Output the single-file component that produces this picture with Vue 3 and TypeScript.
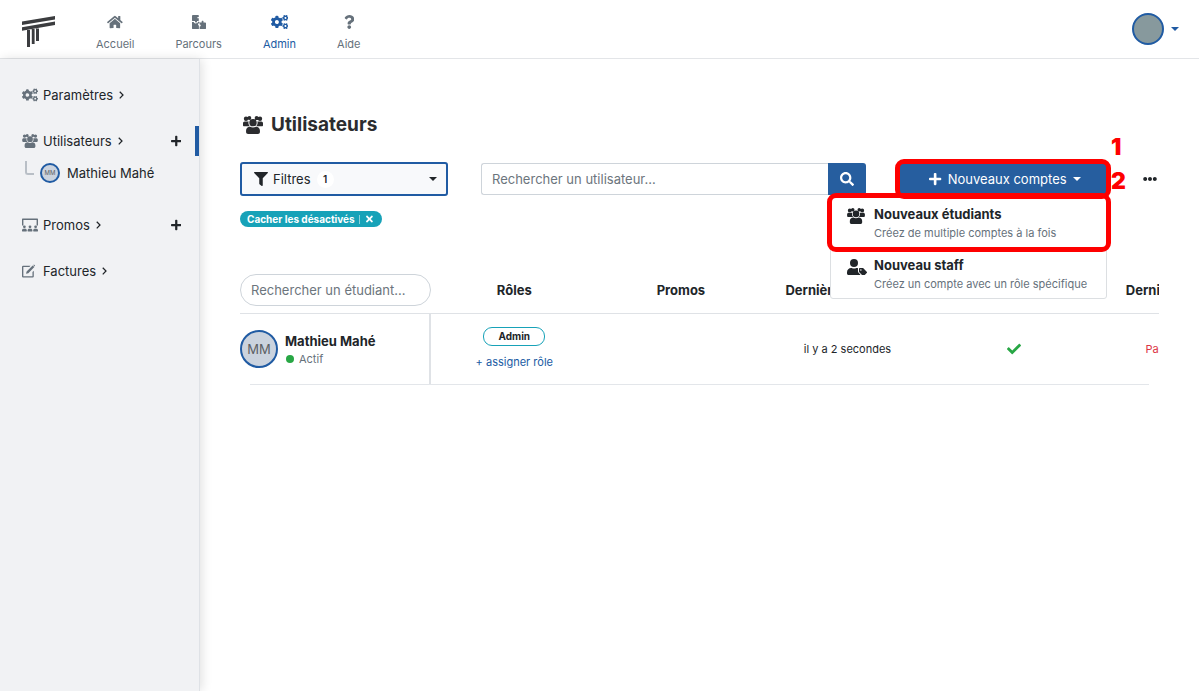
<script setup lang="ts">
import { ref } from 'vue'

interface Glyph { box: string; d: string }

const glyphs: Record<string, Glyph> = {
  home: { box: '0 0 576 512', d: 'M280.37 148.26L96 300.11V464a16 16 0 0 0 16 16l112.06-.29a16 16 0 0 0 15.92-16V368a16 16 0 0 1 16-16h64a16 16 0 0 1 16 16v95.64a16 16 0 0 0 16 16.05L464 480a16 16 0 0 0 16-16V300L295.67 148.26a12.19 12.19 0 0 0-15.3 0zM571.6 251.47L488 182.56V44.05a12 12 0 0 0-12-12h-56a12 12 0 0 0-12 12v72.61L318.47 43a48 48 0 0 0-61 0L4.34 251.47a12 12 0 0 0-1.6 16.9l25.5 31A12 12 0 0 0 45.15 301l235.22-193.74a12.19 12.19 0 0 1 15.3 0L530.9 301a12 12 0 0 0 16.9-1.6l25.5-31a12 12 0 0 0-1.7-16.93z' },
  puzzle: { box: '0 0 512 512', d: 'M32 0h200a16 16 0 0 1 16 16v62c-14-12-58-10-58 18s44 34 58 20v88a16 16 0 0 1-16 16h-56c12 12 20 50-28 50s-44-38-30-50H32a32 32 0 0 1-32-32V32A32 32 0 0 1 32 0zM0 260h64c4 54 104 66 124 10l44 52c-18 16-14 60 20 60v130H32a32 32 0 0 1-32-32zM230 240l52 46-36 30-36-46zM290 272h62c-18-70 82-80 68-8l-2 8h62a32 32 0 0 1 32 32v176a32 32 0 0 1-32 32H280v-90c54 6 54-84 0-76v-64a16 16 0 0 1 10-10z' },
  cogs: { box: '0 0 640 512', d: 'M512.1 191l-8.2 14.3c-3 5.3-9.4 7.5-15.1 5.4-11.8-4.4-22.6-10.7-32.1-18.6-4.6-3.8-5.8-10.5-2.8-15.7l8.2-14.3c-6.9-8-12.3-17.3-15.9-27.4h-16.5c-6 0-11.2-4.3-12.2-10.3-2-12-2.1-24.6 0-37.1 1-6 6.2-10.4 12.2-10.4h16.5c3.6-10.1 9-19.4 15.9-27.4l-8.2-14.3c-3-5.2-1.9-11.9 2.8-15.7 9.5-7.9 20.4-14.2 32.1-18.6 5.7-2.1 12.1.1 15.1 5.4l8.2 14.3c10.5-1.9 21.2-1.9 31.7 0L552 6.3c3-5.3 9.4-7.5 15.1-5.4 11.8 4.4 22.6 10.7 32.1 18.6 4.6 3.8 5.8 10.5 2.8 15.7l-8.2 14.3c6.9 8 12.3 17.3 15.9 27.4h16.5c6 0 11.2 4.3 12.2 10.3 2 12 2.1 24.6 0 37.1-1 6-6.2 10.4-12.2 10.4h-16.5c-3.6 10.1-9 19.4-15.9 27.4l8.2 14.3c3 5.2 1.9 11.9-2.8 15.7-9.5 7.9-20.4 14.2-32.1 18.6-5.7 2.1-12.1-.1-15.1-5.4l-8.2-14.3c-10.4 1.9-21.2 1.9-31.7 0zm-10.5-58.8c38.5 29.6 82.4-14.3 52.8-52.8-38.5-29.7-82.4 14.3-52.8 52.8zM386.3 286.1l33.7 16.8c10.1 5.8 14.5 18.1 10.5 29.1-8.9 24.2-26.4 46.4-42.6 65.8-7.4 8.9-20.2 11.1-30.3 5.3l-29.1-16.8c-16 13.7-34.6 24.6-54.9 31.7v33.6c0 11.6-8.3 21.6-19.7 23.6-24.6 4.2-50.4 4.4-75.9 0-11.5-2-20-11.9-20-23.6V418c-20.3-7.2-38.9-18-54.9-31.7L74 403c-10 5.8-22.9 3.6-30.3-5.3-16.2-19.4-33.3-41.6-42.2-65.7-4-10.9.4-23.2 10.5-29.1l33.3-16.8c-3.9-20.9-3.9-42.4 0-63.4L12 205.8c-10.1-5.8-14.6-18.1-10.5-29 8.9-24.2 26-46.4 42.2-65.8 7.4-8.9 20.2-11.1 30.3-5.3l29.1 16.8c16-13.7 34.6-24.6 54.9-31.7V57.1c0-11.5 8.2-21.5 19.6-23.5 24.6-4.2 50.5-4.4 76-.1 11.5 2 20 11.9 20 23.6v33.6c20.3 7.2 38.9 18 54.9 31.7l29.1-16.8c10-5.8 22.9-3.6 30.3 5.3 16.2 19.4 33.2 41.6 42.1 65.8 4 10.9.1 23.2-10 29.1l-33.7 16.8c3.9 21 3.9 42.5 0 63.5zm-117.6 21.1c59.2-77-28.7-164.9-105.7-105.7-59.2 77 28.7 164.9 105.7 105.7zm243.4 182.7l-8.2 14.3c-3 5.3-9.4 7.5-15.1 5.4-11.8-4.4-22.6-10.7-32.1-18.6-4.6-3.8-5.8-10.5-2.8-15.7l8.2-14.3c-6.9-8-12.3-17.3-15.9-27.4h-16.5c-6 0-11.2-4.3-12.2-10.3-2-12-2.1-24.6 0-37.1 1-6 6.2-10.4 12.2-10.4h16.5c3.6-10.1 9-19.4 15.9-27.4l-8.2-14.3c-3-5.2-1.9-11.9 2.8-15.7 9.5-7.9 20.4-14.2 32.1-18.6 5.7-2.1 12.1.1 15.1 5.4l8.2 14.3c10.5-1.9 21.2-1.9 31.7 0l8.2-14.3c3-5.3 9.4-7.5 15.1-5.4 11.8 4.4 22.6 10.7 32.1 18.6 4.6 3.8 5.8 10.5 2.8 15.7l-8.2 14.3c6.9 8 12.3 17.3 15.9 27.4h16.5c6 0 11.2 4.3 12.2 10.3 2 12 2.1 24.6 0 37.1-1 6-6.2 10.4-12.2 10.4h-16.5c-3.6 10.1-9 19.4-15.9 27.4l8.2 14.3c3 5.2 1.9 11.9-2.8 15.7-9.5 7.9-20.4 14.2-32.1 18.6-5.7 2.1-12.1-.1-15.1-5.4l-8.2-14.3c-10.4 1.9-21.2 1.9-31.7 0zM501.6 431c38.5 29.6 82.4-14.3 52.8-52.8-38.5-29.6-82.4 14.3-52.8 52.8z' },
  question: { box: '0 0 384 512', d: 'M202.021 0C122.202 0 70.503 32.703 29.914 91.026c-7.363 10.58-5.093 25.086 5.178 32.874l43.138 32.709c10.373 7.865 25.132 6.026 33.253-4.148 25.049-31.381 43.63-49.449 82.757-49.449 30.764 0 68.816 19.799 68.816 49.631 0 22.552-18.617 34.134-48.993 51.164-35.423 19.86-82.299 44.576-82.299 106.405V320c0 13.255 10.745 24 24 24h72.471c13.255 0 24-10.745 24-24v-5.773c0-42.86 125.268-44.645 125.268-160.627C377.504 66.256 286.902 0 202.021 0zM192 373.459c-38.196 0-69.271 31.075-69.271 69.271 0 38.195 31.075 69.27 69.271 69.27s69.271-31.075 69.271-69.271-31.075-69.27-69.271-69.27z' },
  users: { box: '0 0 640 576', d: 'M96 156a70 70 0 1 0 0-140 70 70 0 0 0 0 140zM204 124a62 62 0 1 0 0-124 62 62 0 0 0 0 124zM436 124a62 62 0 1 0 0-124 62 62 0 0 0 0 124zM544 156a70 70 0 1 0 0-140 70 70 0 0 0 0 140zM320 330a118 118 0 1 0 0-236 118 118 0 0 0 0 236zM182 172H56c-31 0-56 25-56 56v64c0 18 14 32 32 32h182a150 150 0 0 1-32-152zM584 172H458a150 150 0 0 1-32 152h182c18 0 32-14 32-32v-64c0-31-25-56-56-56zM412 342c-50 32-134 32-184 0-76 0-130 54-130 122v48c0 36 28 64 64 64h316c36 0 64-28 64-64v-48c0-68-54-122-130-122z' },
  classroom: { box: '0 0 640 512', d: 'M24 0h592a24 24 0 0 1 24 24v248h-56V52H56v220H0V24A24 24 0 0 1 24 0zM96 384a56 56 0 1 0 0-112 56 56 0 0 0 0 112zM320 384a56 56 0 1 0 0-112 56 56 0 0 0 0 112zM544 384a56 56 0 1 0 0-112 56 56 0 0 0 0 112zM60 408h72c34 0 60 27 60 60v28a16 16 0 0 1-16 16H16a16 16 0 0 1-16-16v-28c0-33 27-60 60-60zM284 408h72c34 0 60 27 60 60v28a16 16 0 0 1-16 16H240a16 16 0 0 1-16-16v-28c0-33 27-60 60-60zM508 408h72c33 0 60 27 60 60v28a16 16 0 0 1-16 16H464a16 16 0 0 1-16-16v-28c0-33 27-60 60-60z' },
  edit: { box: '0 0 660 560', d: 'M48 64h304l-48 54H56v376h376V320l54-54v236a48 48 0 0 1-48 48H48a48 48 0 0 1-48-48V112a48 48 0 0 1 48-48zM440 50l70 70-250 250-94 24 24-94zM460 30c20-18 46-10 60 4s24 40 6 60z' },
  plus: { box: '0 0 448 512', d: 'M416 208H272V64c0-17.67-14.33-32-32-32h-32c-17.67 0-32 14.33-32 32v144H32c-17.67 0-32 14.33-32 32v32c0 17.67 14.33 32 32 32h144v144c0 17.67 14.33 32 32 32h32c17.67 0 32-14.33 32-32V304h144c17.67 0 32-14.33 32-32v-32c0-17.67-14.33-32-32-32z' },
  filter: { box: '0 0 512 512', d: 'M487.976 0H24.028C2.71 0-8.047 25.866 7.058 40.971L192 225.941V432c0 7.831 3.821 15.17 10.237 19.662l80 55.98C298.02 518.69 320 507.493 320 487.98V225.941l184.947-184.97C520.021 25.896 509.338 0 487.976 0z' },
  search: { box: '0 0 512 512', d: 'M505 442.7L405.3 343c-4.5-4.5-10.6-7-17-7H372c27.6-35.3 44-79.7 44-128C416 93.1 322.9 0 208 0S0 93.1 0 208s93.1 208 208 208c48.3 0 92.7-16.4 128-44v16.3c0 6.4 2.5 12.5 7 17l99.7 99.7c9.4 9.4 24.6 9.4 33.9 0l28.3-28.3c9.4-9.4 9.4-24.6.1-34zM208 336c-70.7 0-128-57.2-128-128 0-70.7 57.2-128 128-128 70.7 0 128 57.2 128 128 0 70.7-57.2 128-128 128z' },
  dots: { box: '0 0 512 512', d: 'M328 256c0 39.8-32.2 72-72 72s-72-32.2-72-72 32.2-72 72-72 72 32.2 72 72zm104-72c-39.8 0-72 32.2-72 72s32.2 72 72 72 72-32.2 72-72-32.2-72-72-72zm-352 0c-39.8 0-72 32.2-72 72s32.2 72 72 72 72-32.2 72-72-32.2-72-72-72z' },
  check: { box: '0 0 512 512', d: 'M173.898 439.404l-166.4-166.4c-9.997-9.997-9.997-26.206 0-36.204l36.203-36.204c9.997-9.998 26.207-9.998 36.204 0L192 312.69 432.095 72.596c9.997-9.997 26.207-9.997 36.204 0l36.203 36.204c9.997 9.997 9.997 26.206 0 36.204l-294.4 294.401c-9.998 9.997-26.207 9.997-36.204-.001z' },
  times: { box: '0 0 352 512', d: 'M242.72 256l100.07-100.07c12.28-12.28 12.28-32.19 0-44.48l-22.24-22.24c-12.28-12.28-32.19-12.28-44.48 0L176 189.28 75.93 89.21c-12.28-12.28-32.19-12.28-44.48 0L9.21 111.45c-12.28 12.28-12.28 32.19 0 44.48L109.28 256 9.21 356.07c-12.28 12.28-12.28 32.19 0 44.48l22.24 22.24c12.28 12.28 32.2 12.28 44.48 0L176 322.72l100.07 100.07c12.28 12.28 32.2 12.28 44.48 0l22.24-22.24c12.28-12.28 12.28-32.19 0-44.48L242.72 256z' },
  userTag: { box: '0 0 640 512', d: 'M224 256a128 128 0 1 0 0-256 128 128 0 0 0 0 256zM352 296c-12-5-25-8-38-8h-17a174 174 0 0 1-146 0h-17C60 288 0 348 0 422v42c0 27 21 48 48 48h352c12 0 22-4 30-11l-58-58a68 68 0 0 1-20-48zM630 405L523 298c-6-6-14-10-23-10h-84c-18 0-32 14-32 32v84c0 9 4 17 10 23l107 107c13 13 33 13 46 0l83-83c13-13 13-33 0-46zM444 372a24 24 0 1 1 0-48 24 24 0 0 1 0 48z' },
  chevron: { box: '0 0 320 512', d: 'M76 14l236 242L76 498l-58-58 178-184L18 72z' }
}

const navItems = [
  { label: 'Accueil', icon: 'home', active: false },
  { label: 'Parcours', icon: 'puzzle', active: false },
  { label: 'Admin', icon: 'cogs', active: true },
  { label: 'Aide', icon: 'question', active: false }
]

const sections = [
  { label: 'Paramètres', icon: 'cogs', addable: false, active: false, members: [] as string[] },
  { label: 'Utilisateurs', icon: 'users', addable: true, active: true, members: ['Mathieu Mahé'] },
  { label: 'Promos', icon: 'classroom', addable: true, active: false, members: [] as string[] },
  { label: 'Factures', icon: 'edit', addable: false, active: false, members: [] as string[] }
]

const menuItems = [
  { title: 'Nouveaux étudiants', text: 'Créez de multiple comptes à la fois', icon: 'users' },
  { title: 'Nouveau staff', text: 'Créez un compte avec un rôle spécifique', icon: 'userTag' }
]

const userQuery = ref('')
const studentQuery = ref('')

const initials = (name: string): string => name.split(' ').map((part) => part[0]).join('')
</script>

<template>
  <div class="page">
    <header class="topbar">
      <a class="logo" href="#" aria-label="Accueil">
        <svg viewBox="0 0 34 32" fill="#3b3c3f">
          <path d="M0 5.6L33 0v3.4L0 9zM0 11.2L33 5.6V9L0 14.8zM5 14h3v17H5zM9.800 13h2.800v15H9.800zM14 12.500h3V25h-3z" />
        </svg>
      </a>
      <nav class="topnav">
        <a v-for="item in navItems" :key="item.label" href="#" class="topnav-link" :class="{ active: item.active }">
          <svg class="icon" :viewBox="glyphs[item.icon].box"><path :d="glyphs[item.icon].d" /></svg>
          {{ item.label }}
        </a>
      </nav>
      <button class="account" aria-label="Mon compte">
        <span class="account-photo"></span>
        <span class="caret"></span>
      </button>
    </header>

    <div class="body">
      <aside class="sidebar">
        <section v-for="section in sections" :key="section.label">
          <div class="side-row" :class="{ active: section.active }">
            <a href="#" class="side-link">
              <svg class="icon side-icon" :viewBox="glyphs[section.icon].box"><path :d="glyphs[section.icon].d" /></svg>
              {{ section.label }}
              <svg class="icon chevron" :viewBox="glyphs.chevron.box"><path :d="glyphs.chevron.d" /></svg>
            </a>
            <button v-if="section.addable" class="side-add" :aria-label="'Ajouter : ' + section.label">
              <svg class="icon small" :viewBox="glyphs.plus.box"><path :d="glyphs.plus.d" /></svg>
            </button>
          </div>
          <div v-if="section.members.length" class="members">
            <a v-for="member in section.members" :key="member" href="#" class="member">
              <span class="branch"></span>
              <span class="avatar tiny">{{ initials(member) }}</span>
              {{ member }}
            </a>
          </div>
        </section>
      </aside>

      <main class="content">
        <h1>
          <svg class="icon" :viewBox="glyphs.users.box"><path :d="glyphs.users.d" /></svg>
          Utilisateurs
        </h1>

        <div class="toolbar">
          <button class="filter">
            <svg class="icon" :viewBox="glyphs.filter.box"><path :d="glyphs.filter.d" /></svg>
            Filtres
            <span class="count">1</span>
            <span class="caret"></span>
          </button>
          <form class="search" @submit.prevent>
            <input v-model="userQuery" type="text" placeholder="Rechercher un utilisateur..." aria-label="Rechercher un utilisateur" />
            <button aria-label="Rechercher">
              <svg class="icon" :viewBox="glyphs.search.box"><path :d="glyphs.search.d" /></svg>
            </button>
          </form>
          <div class="create">
            <button class="create-button">
              <svg class="icon" :viewBox="glyphs.plus.box"><path :d="glyphs.plus.d" /></svg>
              Nouveaux comptes
              <span class="caret"></span>
            </button>
            <div class="menu">
              <a v-for="item in menuItems" :key="item.title" href="#" class="menu-item">
                <svg class="icon" :viewBox="glyphs[item.icon].box"><path :d="glyphs[item.icon].d" /></svg>
                <span>
                  <strong>{{ item.title }}</strong>
                  <small>{{ item.text }}</small>
                </span>
              </a>
            </div>
            <span class="mark mark-button"></span>
            <span class="mark mark-entry"></span>
            <span class="step step-one">1</span>
            <span class="step step-two">2</span>
          </div>
          <button class="more" aria-label="Plus d'options">
            <svg class="icon" :viewBox="glyphs.dots.box"><path :d="glyphs.dots.d" /></svg>
          </button>
        </div>

        <button class="tag">
          Cacher les désactivés <span class="tag-bar"></span>
          <svg class="icon" :viewBox="glyphs.times.box"><path :d="glyphs.times.d" /></svg>
        </button>

        <div class="table-wrap">
          <table>
            <thead>
              <tr>
                <th class="who">
                  <input v-model="studentQuery" type="text" placeholder="Rechercher un étudiant..." aria-label="Rechercher un étudiant" />
                </th>
                <th>Rôles</th>
                <th>Promos</th>
                <th>Dernière connexion</th>
                <th></th>
                <th class="last">Dernière inscription</th>
              </tr>
            </thead>
            <tbody>
              <tr>
                <td class="who">
                  <a href="#" class="person">
                    <span class="avatar">MM</span>
                    <span class="person-text">
                      <strong>Mathieu Mahé</strong>
                      <span class="status">Actif</span>
                    </span>
                  </a>
                </td>
                <td>
                  <span class="role">Admin</span>
                  <a href="#" class="assign">+ assigner rôle</a>
                </td>
                <td></td>
                <td>il y a 2 secondes</td>
                <td><svg class="icon check" :viewBox="glyphs.check.box"><path :d="glyphs.check.d" /></svg></td>
                <td class="last never">Pas d'inscription</td>
              </tr>
            </tbody>
          </table>
        </div>
      </main>
    </div>
  </div>
</template>

<style>
body {
  margin: 0;
}
</style>

<style scoped>
.page {
  min-height: 100vh;
  display: flex;
  flex-direction: column;
  background: #fff;
  color: #212529;
  font: 13px/20px Inter, "Liberation Sans", sans-serif;
}
.page * {
  box-sizing: border-box;
}
a {
  color: inherit;
  text-decoration: none;
}
button {
  border: 0;
  padding: 0;
  background: none;
  color: inherit;
  font: inherit;
  cursor: pointer;
}
.icon {
  display: block;
  height: 14px;
  flex: none;
  fill: currentColor;
}
.icon.small {
  height: 12px;
}
.caret {
  border: 4px solid transparent;
  border-top-color: currentColor;
  border-bottom: 0;
}
.topbar {
  display: flex;
  align-items: center;
  height: 59px;
  padding: 0 20px 0 22px;
  border-bottom: 1px solid #e3e5e8;
}
.logo svg {
  display: block;
  width: 34px;
  height: 32px;
  margin-top: 5px;
}
.topnav {
  display: flex;
  gap: 41px;
  margin: 9px 0 0 40px;
  flex: 1;
}
.topnav-link {
  display: flex;
  flex-direction: column;
  align-items: center;
  gap: 7px;
  color: #66717b;
  font-size: 11px;
  line-height: 16px;
}
.topnav-link.active {
  color: #205ba3;
}
.account {
  display: flex;
  align-items: center;
  gap: 7px;
  color: #205ba3;
}
.account-photo {
  width: 32px;
  height: 32px;
  border: 2px solid #205ba3;
  border-radius: 50%;
  background: #87999d;
}
.body {
  display: flex;
  flex: 1;
}
.sidebar {
  display: flex;
  flex-direction: column;
  gap: 16px;
  width: 200px;
  flex: none;
  padding-top: 21px;
  background: #f1f2f4;
  border-right: 1px solid #dfe2e6;
  box-shadow: 2px 0 10px rgba(0, 0, 0, 0.12);
}
.side-row {
  display: flex;
  align-items: center;
  justify-content: space-between;
  height: 30px;
  padding: 0 14px 0 22px;
  border-right: 4px solid transparent;
}
.side-row.active {
  border-right-color: #205ba3;
}
.side-link {
  display: flex;
  align-items: center;
}
.side-icon {
  width: 16px;
  margin-right: 5px;
  color: #66717b;
}
.chevron {
  height: 8px;
  margin-left: 6px;
}
.members {
  padding: 1px 0 6px 25px;
}
.member {
  display: flex;
  align-items: center;
  height: 31px;
}
.branch {
  width: 9px;
  height: 14px;
  margin: 0 6px 10px 0;
  border: solid #b9bfc6;
  border-width: 0 0 2px 2px;
  border-bottom-left-radius: 3px;
}
.avatar {
  display: flex;
  align-items: center;
  justify-content: center;
  width: 38px;
  height: 38px;
  flex: none;
  border: 2px solid #205ba3;
  border-radius: 50%;
  background: #cbd3de;
  color: #5c6064;
}
.avatar.tiny {
  width: 20px;
  height: 20px;
  margin-right: 7px;
  font-size: 6px;
}
.content {
  flex: 1;
  min-width: 0;
  padding: 53px 40px 40px;
}
h1 {
  display: flex;
  align-items: center;
  gap: 8px;
  margin: 0 0 24px;
  padding-left: 3px;
  color: #2b2c2f;
  font-size: 19px;
  font-weight: 700;
  line-height: 26px;
}
h1 .icon {
  height: 18px;
  width: 20px;
}
.toolbar {
  display: flex;
  align-items: center;
  gap: 33px;
}
.filter {
  display: flex;
  align-items: center;
  width: 208px;
  height: 34px;
  padding: 0 9px 0 12px;
  border: 2px solid #205ba3;
  border-radius: 3px;
  background: #f8f9fb;
}
.filter .icon {
  margin-right: 5px;
}
.count {
  width: 17px;
  margin-left: 6px;
  border-radius: 9px;
  background: #fff;
  font-size: 10px;
  font-weight: 600;
  line-height: 17px;
}
.filter .caret {
  margin-left: auto;
}
.search {
  display: flex;
  flex: 1;
  min-width: 0;
  height: 32px;
}
.search input {
  flex: 1;
  min-width: 0;
  padding: 0 10px;
  border: 1px solid #ced4da;
  border-right: 0;
  border-radius: 3px 0 0 3px;
  font: inherit;
}
input::placeholder {
  color: #6c757d;
  opacity: 1;
}
.search button {
  display: flex;
  align-items: center;
  justify-content: center;
  width: 38px;
  border-radius: 0 3px 3px 0;
  background: #265e9f;
  color: #fff;
}
.create {
  position: relative;
  width: 208px;
}
.create-button {
  display: flex;
  align-items: center;
  justify-content: center;
  gap: 6px;
  width: 100%;
  height: 32px;
  padding-left: 4px;
  border-radius: 3px;
  background: #265e9f;
  color: #fff;
}
.menu {
  position: absolute;
  z-index: 2;
  top: 33px;
  right: 0;
  display: flex;
  flex-direction: column;
  gap: 13px;
  width: 277px;
  padding: 7px 0 5px;
  border: 1px solid #dcdfe2;
  border-radius: 3px;
  background: #fff;
}
.menu-item {
  display: flex;
  gap: 7px;
  padding-left: 16px;
}
.menu-item .icon {
  width: 20px;
  height: 16px;
  margin-top: 4px;
}
.menu-item:first-child .icon {
  width: 18px;
  margin-right: 2px;
}
.menu-item strong,
.menu-item small {
  display: block;
  white-space: nowrap;
}
.menu-item strong {
  font-weight: 700;
}
.menu-item small {
  color: #66717b;
  font-size: 11px;
  line-height: 18px;
}
.mark {
  position: absolute;
  z-index: 3;
  border: 5px solid #fe0000;
  border-radius: 9px;
  pointer-events: none;
}
.mark-button {
  inset: -4px;
}
.mark-entry {
  top: 30px;
  right: -4px;
  width: 284px;
  height: 59px;
}
.step {
  position: absolute;
  z-index: 3;
  left: 212px;
  color: #fe0000;
  font-size: 23px;
  font-weight: 900;
  line-height: 24px;
}
.step-one {
  top: -28px;
}
.step-two {
  top: 6px;
}
.more {
  display: flex;
  justify-content: center;
  width: 19px;
}
.tag {
  display: flex;
  align-items: center;
  gap: 4px;
  height: 16px;
  margin-top: 15px;
  padding: 0 9px 0 7px;
  border-radius: 8px;
  background: #17a2b8;
  color: #fff;
  font-size: 10px;
  font-weight: 700;
  line-height: 16px;
}
.tag-bar {
  width: 1px;
  height: 9px;
  background: #8bd0db;
}
.tag .icon {
  height: 10px;
  margin-left: 2px;
}
.table-wrap {
  margin-top: 39px;
  overflow: hidden;
}
table {
  width: 1024px;
  table-layout: fixed;
  border-collapse: separate;
  border-spacing: 0;
}
th,
td {
  padding: 0;
  text-align: center;
}
th {
  height: 48px;
  border-bottom: 1px solid #dfe2e6;
  font-weight: 700;
  white-space: nowrap;
}
.who {
  width: 191px;
  text-align: left;
}
th input {
  display: block;
  width: 191px;
  height: 32px;
  padding: 0 10px;
  border: 1px solid #ced4da;
  border-radius: 16px;
  font: inherit;
  font-weight: 400;
}
td {
  height: 70px;
  font-size: 11px;
}
td.who {
  border-right: 2px solid #dfe2e6;
}
.table-wrap::after {
  content: "";
  display: block;
  height: 1px;
  margin: 0 10px;
  background: #e3e6ea;
}
.person {
  display: flex;
  align-items: center;
  gap: 7px;
}
.person .avatar {
  font-size: 13px;
}
.person strong {
  display: block;
  font-size: 13px;
  font-weight: 700;
}
.status {
  display: flex;
  align-items: center;
  gap: 5px;
  color: #66717b;
  line-height: 17px;
}
.status::before {
  content: "";
  width: 8px;
  height: 8px;
  margin-left: 1px;
  border-radius: 50%;
  background: #28a745;
}
.role {
  display: block;
  width: 62px;
  margin: 0 auto 6px;
  border: 1px solid #17a2b8;
  border-radius: 9px;
  font-size: 10px;
  font-weight: 700;
  line-height: 17px;
}
.assign {
  color: #205ba3;
}
.check {
  margin: 0 auto;
  color: #28a745;
}
.last {
  padding-left: 16px;
}
.never {
  color: #dc3545;
}
</style>
